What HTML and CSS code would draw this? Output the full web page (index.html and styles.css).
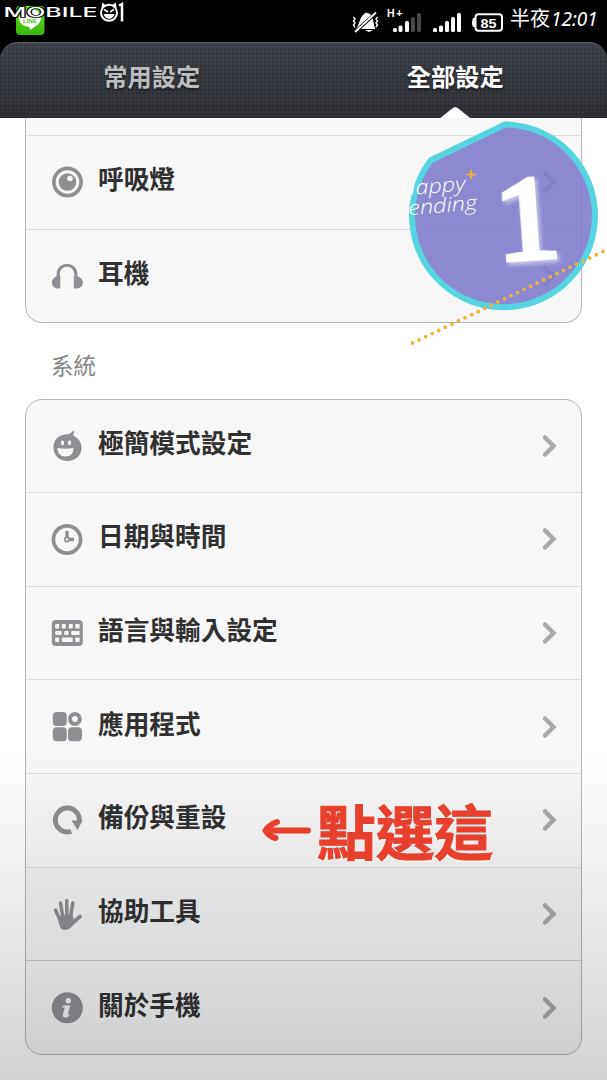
FILE: index.html
```html
<!DOCTYPE html>
<html lang="zh-Hant">
<head>
<meta charset="utf-8">
<title>全部設定</title>
<link rel="stylesheet" href="styles.css">
</head>
<body>
<div class="phone">
  <div class="statusbar">
    <svg class="brand" width="130" height="42" viewBox="0 0 130 42">
      <defs><linearGradient id="lg" x1="0" y1="0" x2="0" y2="1"><stop offset="0" stop-color="#63e325"/><stop offset="1" stop-color="#37b70b"/></linearGradient></defs>
      <rect x="16" y="6" width="28.500" height="29" rx="4" fill="url(#lg)"/>
      <path d="M19 18c0-12 22-12 22 0 0 6-7 9-11 12-1-1 1-2-1-3-6-1-10-4-10-9z" fill="#fff"/>
      <text x="23" y="23" class="line-word" textLength="14" lengthAdjust="spacingAndGlyphs">LINE</text>
      <text x="3.500" y="17" class="mobile-word" textLength="94" lengthAdjust="spacingAndGlyphs">MOBILE</text>
      <circle cx="109" cy="12.800" r="8" fill="#000" stroke="#fff" stroke-width="2"/>
      <path d="M101.500 8l1-5.500 4 3.500zM111 5.500l5-3 .5 5.500z" fill="#fff"/>
      <path d="M104 9.500l4 2.500M114 9.500l-4 2.500" stroke="#fff" stroke-width="1.500"/>
      <path d="M103.500 14h11c-1 6-9 7-11 0z" fill="#fff"/>
      <path d="M119 5.500l3-1.500v17.500" fill="none" stroke="#fff" stroke-width="2.500"/>
    </svg>
    <div class="indicators">
      <svg width="157" height="42" viewBox="350 0 157 42">
        <g fill="#fff">
          <path d="M355.500 29c4-3 4-12 8-14.500l2.500-2 3 1c5 2 4 11.500 6.500 15.500z"/><path d="M365 30h8l-4 2z"/>
          <path d="M354 33L377 12" stroke="#000" stroke-width="3.500"/>
          <path d="M355 32L376 12.500" stroke="#fff" stroke-width="1.800"/>
          <path d="M353.500 17l1.500 2-1.500 2 1.500 2-1.500 2 1.500 2M377.500 17l-1.500 2 1.500 2-1.500 2 1.500 2-1.500 2" fill="none" stroke="#fff" stroke-width="1.400"/>
          <rect x="393" y="28" width="4" height="4" rx="1.500"/><rect x="398.500" y="25.500" width="4" height="6.500" rx="1.500"/><rect x="405" y="21" width="4" height="11" rx="1.500"/>
          <g fill="#494949"><rect x="411" y="17" width="4" height="15" rx="1.500"/><rect x="417" y="13" width="4" height="19" rx="1.500"/></g>
          <rect x="433" y="28" width="4" height="4" rx="1.500"/><rect x="439" y="25.500" width="4" height="6.500" rx="1.500"/><rect x="445" y="21" width="4" height="11" rx="1.500"/><rect x="451" y="17" width="4" height="15" rx="1.500"/><rect x="457" y="13" width="4" height="19" rx="1.500"/>
          <rect x="475.500" y="14.200" width="26.500" height="16.600" rx="3" fill="none" stroke="#fff" stroke-width="2"/>
          <path d="M475 18h-2q-2 5 0 9h2z"/>
          <text x="387" y="17" class="net-word" textLength="15.500">H+</text>
          <text x="480.500" y="27.800" class="battery-word" textLength="16" lengthAdjust="spacingAndGlyphs">85</text>
        </g>
      </svg>
      <span class="clock"><span class="clock-period">半夜</span><span class="clock-time">12:01</span></span>
    </div>
  </div>
  <div class="tabs-frame">
    <div class="tabs">
      <div class="tab">常用設定</div>
      <div class="tab tab-active">全部設定</div>
    </div>
  </div>
  <main class="content">
    <section class="card card-top">
      <div class="stub"></div>
      <div class="row">
        <svg class="icon" viewBox="0 0 32 32"><circle cx="16.500" cy="16" r="13.600" fill="none" stroke="#8e8f93" stroke-width="3.600"/><circle cx="16.500" cy="16" r="8.800" fill="#8e8f93"/><circle cx="19" cy="12.500" r="2.800" fill="#f7f7f7"/></svg>
        <span class="label">呼吸燈</span><svg class="arrow" viewBox="0 0 14 22"><path d="M2 2.500l8.500 8.500L2 19.500"/></svg>
      </div>
      <div class="row">
        <svg class="icon" viewBox="0 0 32 32"><path d="M7 20v-5c0-13 18-13 18 0v5" fill="none" stroke="#8e8f93" stroke-width="3"/><path d="M9.300 15.500V27q0 1.500-2 1.500C3 28.500 1 26 1 22.500S3.500 16 9.300 15.500zM22.800 15.500V27q0 1.500 2 1.500c5 0 7-2.500 7-6s-3-6.500-9-7z" fill="#8e8f93"/></svg>
        <span class="label">耳機</span><svg class="arrow" viewBox="0 0 14 22"><path d="M2 2.500l8.500 8.500L2 19.500"/></svg>
      </div>
    </section>
    <h2 class="section-title">系統</h2>
    <section class="card">
      <div class="row">
        <svg class="icon" viewBox="0 0 32 32"><path d="M16.500 31C9 31 2.500 26 2.500 17.500 2.500 8 9 4.500 17 4.200c2-.2 4.300-2 5.800-4.200.5 2 0 4-.8 5.400 4.500 2 8.500 6 8.500 12.100 0 8.500-6.500 13.500-14 13.500z" fill="#8e8f93"/><ellipse cx="11.500" cy="12.700" rx="1.700" ry="2.500" fill="#f7f7f7"/><ellipse cx="18.500" cy="12.700" rx="1.700" ry="2.500" fill="#f7f7f7"/><path d="M6.500 18q8.500 1.500 16 0 0 8.500-8 8.500T6.500 18z" fill="#f7f7f7"/></svg>
        <span class="label">極簡模式設定</span><svg class="arrow" viewBox="0 0 14 22"><path d="M2 2.500l8.500 8.500L2 19.500"/></svg>
      </div>
      <div class="row">
        <svg class="icon" viewBox="0 0 32 32"><circle cx="16" cy="16.500" r="13.600" fill="none" stroke="#8e8f93" stroke-width="3.700"/><path d="M16 8v8.500h7" fill="none" stroke="#8e8f93" stroke-width="3.400"/><circle cx="16" cy="16.500" r="3" fill="#8e8f93"/><circle cx="16" cy="16.500" r="1.200" fill="#f7f7f7"/></svg>
        <span class="label">日期與時間</span><svg class="arrow" viewBox="0 0 14 22"><path d="M2 2.500l8.500 8.500L2 19.500"/></svg>
      </div>
      <div class="row">
        <svg class="icon" viewBox="0 0 32 32"><rect x=".8" y="3" width="31" height="26" rx="4" fill="#8e8f93"/><g fill="#f7f7f7"><rect x="4.200" y="7" width="4" height="4.500" rx="1"/><rect x="10.800" y="7" width="4" height="4.500" rx="1"/><rect x="17.800" y="7" width="4" height="4.500" rx="1"/><rect x="24.200" y="7" width="4.500" height="4.500" rx="1"/><rect x="4.200" y="14" width="6.500" height="4" rx="1"/><rect x="13.200" y="14" width="4.500" height="4" rx="1"/><rect x="20.200" y="14" width="8.500" height="4" rx="1"/><rect x="4.200" y="20.500" width="4" height="4.500" rx="1"/><rect x="10.800" y="20.500" width="11" height="4.500" rx="1"/><rect x="24.200" y="20.500" width="4.500" height="4.500" rx="1"/></g></svg>
        <span class="label">語言與輸入設定</span><svg class="arrow" viewBox="0 0 14 22"><path d="M2 2.500l8.500 8.500L2 19.500"/></svg>
      </div>
      <div class="row">
        <svg class="icon" viewBox="0 0 32 32"><g fill="#8e8f93"><rect x="1.800" y="1" width="14" height="14" rx="4"/><rect x="1.800" y="16.200" width="14" height="14" rx="4"/><rect x="17" y="16.200" width="14" height="14" rx="4"/></g><circle cx="23.900" cy="8" r="4.900" fill="none" stroke="#8e8f93" stroke-width="4"/></svg>
        <span class="label">應用程式</span><svg class="arrow" viewBox="0 0 14 22"><path d="M2 2.500l8.500 8.500L2 19.500"/></svg>
      </div>
      <div class="row">
        <svg class="icon" viewBox="0 0 32 32"><path d="M20.200 27.400A12 12 0 1 1 28.200 18" fill="none" stroke="#8e8f93" stroke-width="5"/><path d="M20.500 16.500h11L26.500 26z" fill="#8e8f93"/></svg>
        <span class="label">備份與重設</span><svg class="arrow" viewBox="0 0 14 22"><path d="M2 2.500l8.500 8.500L2 19.500"/></svg>
      </div>
      <div class="row row-shaded">
        <svg class="icon" viewBox="0 0 32 32"><g stroke="#8e8f93" stroke-width="3.500" stroke-linecap="round" fill="none"><path d="M4.500 12l4 9M9.500 5L12 20M15.800 2.500V18M21.800 5l-2.300 14"/><path d="M29 18.500l-7 6" stroke-width="3.800"/></g><path d="M7 18l14.500-2 1.500 6.500 4-2.500-1.500 3.500-6 6.500q-6 4-10 0Q7 25 7 18z" fill="#8e8f93"/></svg>
        <span class="label">協助工具</span><svg class="arrow" viewBox="0 0 14 22"><path d="M2 2.500l8.500 8.500L2 19.500"/></svg>
      </div>
      <div class="row row-last">
        <svg class="icon" viewBox="0 0 32 32"><circle cx="16.300" cy="15.800" r="15.500" fill="#8e8f93"/><circle cx="17.300" cy="8.800" r="2.700" fill="#f7f7f7"/><path d="M12 13.500h7.200l-2.400 9.300q1 .2 2.800-1.300-2 4.500-5.500 4-3-.5-2-3.600l1.700-6.400h-2.500z" fill="#f7f7f7"/></svg>
        <span class="label">關於手機</span><svg class="arrow" viewBox="0 0 14 22"><path d="M2 2.500l8.500 8.500L2 19.500"/></svg>
      </div>
    </section>
  </main>
  <div class="fade"></div>
  <svg class="sticker" width="217" height="240" viewBox="390 110 217 240">
    <path d="M430.800 160.200L505.500 124.300A91.500 91.500 0 1 1 430.800 160.200z" fill="#7c78cd" fill-opacity=".87" stroke="#55d5e2" stroke-width="6"/>
    <g class="happy" transform="rotate(-5 400 195)"><text x="400" y="196" textLength="66" lengthAdjust="spacingAndGlyphs">Happy</text><text x="407" y="216" textLength="69" lengthAdjust="spacingAndGlyphs">ending</text></g>
    <path d="M471 170v9M466.500 174.500h9" stroke="#f2ad35" stroke-width="2"/>
    <g transform="translate(533 259) rotate(-4) scale(1.080 1)"><text x="-3" y="-1" class="number" text-anchor="middle">1</text></g>
    <path d="M412.500 343L603 251.500" stroke="#efb238" stroke-width="3.800" stroke-linecap="round" stroke-dasharray="0 7.280"/>
  </svg>
  <div class="callout">
    <svg width="50" height="26" viewBox="0 0 50 26"><path d="M46 13.500H4M15 5Q7 8 3.500 13.500 8 20 13.500 21" fill="none" stroke="#e8402c" stroke-width="6" stroke-linecap="round" stroke-linejoin="round"/></svg>
    <span>點選這</span>
  </div>
</div>
</body>
</html>
```

FILE: styles.css
```css
* { box-sizing: border-box; }
body { margin: 0; background: #fff; font-family: "Noto Sans CJK TC", sans-serif; }
.phone { position: relative; width: 607px; height: 1080px; overflow: hidden; display: flex; flex-direction: column; background: #fff; }
.statusbar { height: 42px; flex: none; display: flex; justify-content: space-between; background: #000; color: #fff; }
.line-word { font: bold 5px "Liberation Sans", sans-serif; fill: #4dcc18; }
.mobile-word { font: 500 12.500px Inter, sans-serif; fill: #fff; stroke: #000; stroke-width: 1.500px; paint-order: stroke; }
.net-word { font: bold 10.500px "Liberation Sans", sans-serif; }
.battery-word { font: bold 13px "Liberation Sans", sans-serif; }
.indicators { display: flex; width: 257px; }
.clock { display: flex; width: 100px; padding-left: 3px; line-height: 36px; white-space: nowrap; }
.clock-period { font-size: 20px; font-weight: 400; width: 41px; }
.clock-time { font: italic 19px/38px "Noto Sans", sans-serif; }
.tabs-frame { height: 76px; flex: none; background: linear-gradient(#000 50%, #303238 50%); }
.tabs { height: 76px; display: flex; border-top: 1px solid #5c6067; border-radius: 18px 18px 0 0;
  background: repeating-linear-gradient(0deg, rgba(0,0,0,.12) 0 1px, transparent 1px 4px), repeating-linear-gradient(90deg, rgba(0,0,0,.12) 0 1px, transparent 1px 4px), linear-gradient(#42454d, #2f3137); }
.tab { flex: 1; position: relative; text-align: center; color: #bcbdbf; font-size: 24.200px; font-weight: 700; line-height: 66px; text-shadow: 0 2px 3px rgba(0,0,0,.5); }
.tab-active { color: #fff; }
.tab-active::after { content: ""; position: absolute; left: 50%; bottom: 0; margin-left: -15px; width: 30px; height: 11px; background: #fff; clip-path: polygon(0 100%, 42% 8%, 50% 0, 58% 8%, 100% 100%); }
.content { padding: 0 25px; }
.card { border: 1px solid #b5b6b8; border-radius: 17px; background: #f7f7f7; overflow: hidden; }
.card-top { height: 205px; border-top: 0; border-radius: 0 0 17px 17px; }
.stub { height: 17px; }
.row { height: 93.700px; display: flex; align-items: center; padding: 0 24px 0 25px; border-top: 1px solid #dcdcdd; }
.card:not(.card-top) .row:first-child { border-top: 0; height: 92px; padding-bottom: 1px; }
.icon { width: 32px; height: 32px; flex: none; }
.label { flex: 1; margin: -8px 0 0 15px; color: #303030; font-size: 25.700px; font-weight: 700; line-height: 36px; white-space: nowrap; }
.arrow { width: 14px; height: 22px; fill: none; stroke: #aaa; stroke-width: 4.500px; stroke-linecap: round; }
.section-title { height: 76px; margin: 0; padding-left: 26px; color: #858585; font-size: 22.500px; font-weight: 400; line-height: 83px; }
.row-shaded { background: linear-gradient(#f1f4f3, #f6f6f7); border-top-color: #dcdfdf; }
.row-last { border-top-color: #cfd0d1; }
.fade { position: absolute; left: 0; right: 0; top: 750px; bottom: 0; background: linear-gradient(rgba(10,14,20,0), rgba(10,14,20,.18)); }
.sticker { position: absolute; left: 390px; top: 110px; }
.happy { font: italic 300 20px "Open Sans", sans-serif; fill: #fff; }
.number { font: 118px "Liberation Serif", serif; fill: #fff; stroke: #fff; stroke-width: 5.500px; filter: drop-shadow(2px 3px 2px rgba(255,255,255,.55)); }
.callout { position: absolute; left: 262px; top: 797px; display: flex; align-items: center; gap: 5px; color: #e8402c; font-size: 58.700px; font-weight: 700; line-height: 66px; white-space: nowrap; text-shadow: 0 1px 3px #fff; -webkit-text-stroke: 1px #e8402c; }
```
